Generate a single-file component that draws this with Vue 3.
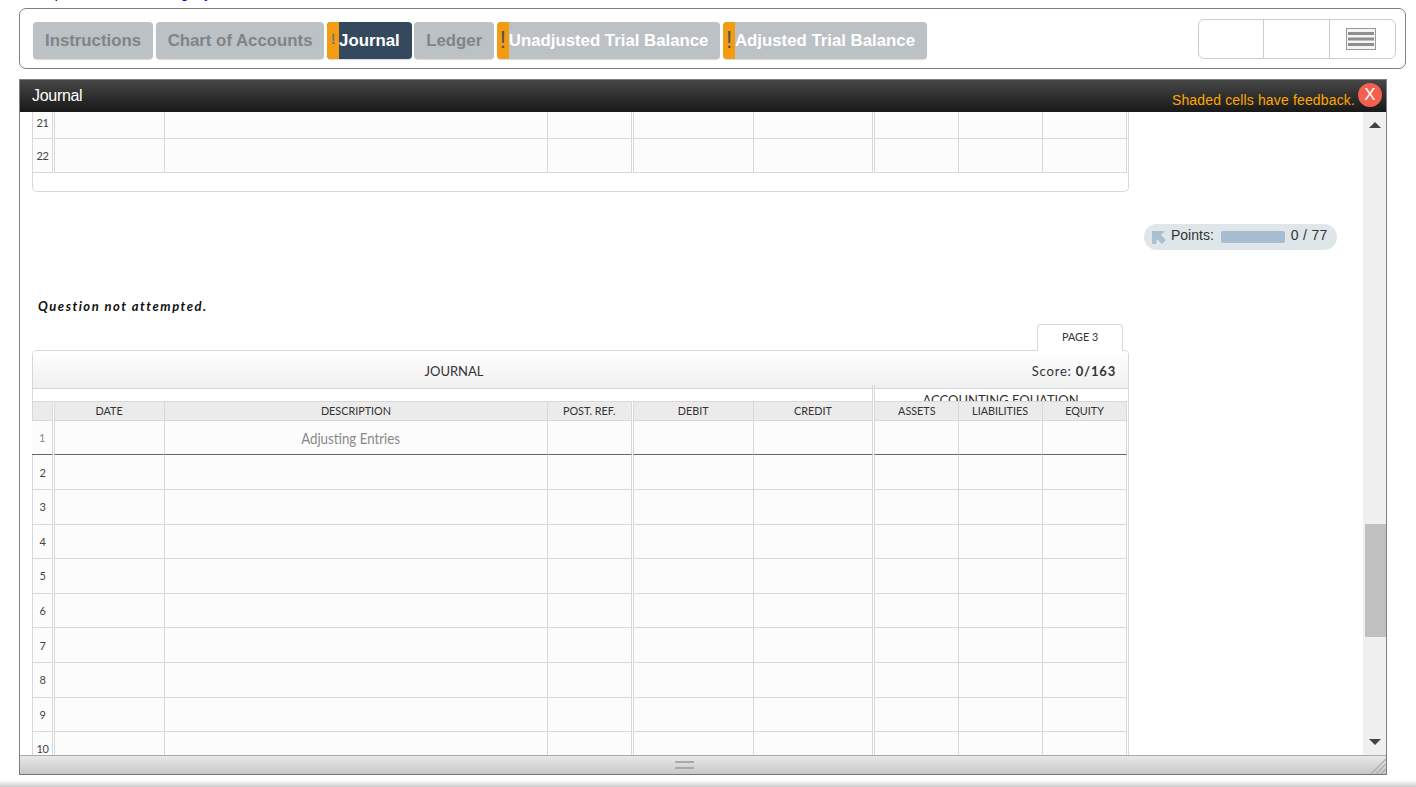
<script setup>
const tabs = [
  { label: 'Instructions', state: 'off' },
  { label: 'Chart of Accounts', state: 'off' },
  { label: 'Journal', state: 'active', warn: true },
  { label: 'Ledger', state: 'off' },
  { label: 'Unadjusted Trial Balance', state: 'done', warn: true },
  { label: 'Adjusted Trial Balance', state: 'done', warn: true }
]

const columns = ['DATE', 'DESCRIPTION', 'POST. REF.', 'DEBIT', 'CREDIT', 'ASSETS', 'LIABILITIES', 'EQUITY']
const lowerRows = [2, 3, 4, 5, 6, 7, 8, 9, 10]
</script>

<template>
  <div class="page">
    <div class="cut-line"><span>Required</span><a>glory</a></div>

    <div class="topbar">
      <div class="tabs">
        <div v-for="tab in tabs" :key="tab.label" class="tab" :class="tab.state">
          <span v-if="tab.warn" class="warn">!</span>
          <span class="tab-label">{{ tab.label }}</span>
        </div>
      </div>
      <div class="tools">
        <div class="tool"></div>
        <div class="tool"></div>
        <div class="tool">
          <svg width="30" height="22" viewBox="0 0 30 22">
            <rect x="0.5" y="0.5" width="29" height="21" fill="#f4f4f4" stroke="#999" />
            <path d="M2 5.5H28M2 11H28M2 16.5H28" stroke="#8f8f8f" stroke-width="3.2" />
          </svg>
        </div>
      </div>
    </div>

    <div class="window">
      <div class="win-head">
        <span class="win-title">Journal</span>
        <span class="win-note">Shaded cells have feedback.</span>
        <span class="win-close">X</span>
      </div>

      <div class="win-body">
        <div class="scroll">
          <div class="card card-top">
            <div class="row cut">
              <div class="num">21</div><div class="gap"></div>
              <div class="cell lead"></div><div class="cell"></div><div class="cell"></div><div class="gap"></div>
              <div class="cell lead"></div><div class="cell"></div><div class="gap"></div>
              <div class="cell lead"></div><div class="cell"></div><div class="cell"></div>
            </div>
            <div class="row">
              <div class="num">22</div><div class="gap"></div>
              <div class="cell lead"></div><div class="cell"></div><div class="cell"></div><div class="gap"></div>
              <div class="cell lead"></div><div class="cell"></div><div class="gap"></div>
              <div class="cell lead"></div><div class="cell"></div><div class="cell"></div>
            </div>
          </div>

          <div class="points-row">
            <div class="points">
              <svg width="14" height="13" viewBox="0 0 14 13">
                <path d="M0 0H13L9 4L14 9L10 13L5 8L4 13H0Z" fill="#a9c0d0" />
              </svg>
              <span class="points-text">Points:</span>
              <i class="points-bar"></i>
              <span class="points-text points-val">0 / 77</span>
            </div>
          </div>

          <p class="attempt">Question not attempted.</p>

          <div class="page-tab"><span class="narrow">PAGE 3</span></div>
          <div class="card card-main">
            <i class="eq-rule"></i>
            <div class="title">
              <span class="title-name">JOURNAL</span>
              <span class="score">Score: <b>0/163</b></span>
            </div>
            <div class="group">
              <div class="group-eq">ACCOUNTING EQUATION</div>
            </div>
            <div class="row head">
              <div class="num"></div><div class="gap"></div>
              <div class="cell lead"><span class="narrow">{{ columns[0] }}</span></div>
              <div class="cell"><span class="narrow">{{ columns[1] }}</span></div>
              <div class="cell"><span class="narrow">{{ columns[2] }}</span></div><div class="gap"></div>
              <div class="cell lead"><span class="narrow">{{ columns[3] }}</span></div>
              <div class="cell"><span class="narrow">{{ columns[4] }}</span></div><div class="gap"></div>
              <div class="cell lead"><span class="narrow">{{ columns[5] }}</span></div>
              <div class="cell"><span class="narrow">{{ columns[6] }}</span></div>
              <div class="cell"><span class="narrow">{{ columns[7] }}</span></div>
            </div>
            <div class="row first">
              <div class="num pale">1</div><div class="gap"></div>
              <div class="cell lead"></div>
              <div class="cell entry"><span class="narrow">Adjusting Entries</span></div>
              <div class="cell"></div><div class="gap"></div>
              <div class="cell lead"></div><div class="cell"></div><div class="gap"></div>
              <div class="cell lead"></div><div class="cell"></div><div class="cell"></div>
            </div>
            <div v-for="n in lowerRows" :key="n" class="row">
              <div class="num">{{ n }}</div><div class="gap"></div>
              <div class="cell lead"></div><div class="cell"></div><div class="cell"></div><div class="gap"></div>
              <div class="cell lead"></div><div class="cell"></div><div class="gap"></div>
              <div class="cell lead"></div><div class="cell"></div><div class="cell"></div>
            </div>
          </div>
        </div>

        <div class="scrollbar">
          <i class="arrow up"></i>
          <i class="thumb"></i>
          <i class="arrow down"></i>
        </div>
      </div>

      <div class="win-foot">
        <i class="grip"></i>
        <svg class="resize" width="16" height="16" viewBox="0 0 16 16">
          <path d="M1 16L16 1M6 16L16 6M11 16L16 11" stroke="#aaa" stroke-width="1.2" />
        </svg>
      </div>
    </div>

    <div class="page-shade"></div>
  </div>
</template>

<style scoped>
.page {
  width: 1416px;
  height: 787px;
  overflow: hidden;
  background: #fff;
  font-family: "Liberation Sans", Arial, sans-serif;
}

.cut-line {
  height: 8px;
  overflow: hidden;
  padding-left: 32px;
  display: flex;
  gap: 92px;
  font-size: 14px;
  line-height: 14px;
}

.cut-line span,
.cut-line a {
  display: block;
  margin-top: -14px;
  color: #000;
}

.cut-line a {
  color: #00e;
}

.topbar {
  width: 1387px;
  height: 61px;
  box-sizing: border-box;
  margin-left: 19px;
  padding: 10px 9px 0 13px;
  border: 1px solid #808080;
  border-radius: 7px;
  display: flex;
  justify-content: space-between;
}

.tabs {
  display: flex;
  gap: 2.6px;
  margin-top: 3px;
  height: 37px;
}

.tab {
  display: flex;
  align-items: center;
  height: 37px;
  padding: 0 12px;
  border-radius: 4px;
  overflow: hidden;
  background: #bcc1c5;
  box-shadow: 0 1px 1px #d8dbdd;
  color: #808487;
  font-size: 16.8px;
  font-weight: bold;
}

.tab.done {
  color: #fff;
  padding-left: 0;
}

.tab.active {
  color: #fff;
  padding-left: 0;
  background: #34495e;
}

.warn {
  width: 12px;
  height: 37px;
  background: #f39c12;
  color: #555;
  font-weight: normal;
  font-size: 24px;
  line-height: 35px;
  text-align: center;
}

.active .warn {
  color: #777;
  font-size: 14px;
  font-weight: bold;
}

.tools {
  width: 198px;
  height: 40px;
  box-sizing: border-box;
  border: 1px solid #ccc;
  border-radius: 6px;
  display: flex;
}

.tool {
  width: 66px;
  display: flex;
  align-items: center;
  justify-content: center;
  box-sizing: border-box;
  border-left: 1px solid #ccc;
}

.tool:first-child {
  width: 64px;
  border-left: 0;
}

.tool svg {
  margin-right: 4px;
}

.window {
  width: 1368px;
  height: 696px;
  box-sizing: border-box;
  margin: 10px 0 0 19px;
  border: 1px solid #808080;
  border-bottom-color: #777;
  display: flex;
  flex-direction: column;
}

.win-head {
  position: relative;
  height: 32px;
  flex: none;
  display: flex;
  align-items: center;
  justify-content: space-between;
  padding: 0 31px 0 12px;
  background: linear-gradient(#474747, #181818);
}

.win-title {
  color: #fff;
  font-size: 16px;
  letter-spacing: -0.3px;
}

.win-note {
  margin-top: 8px;
  color: #ffa500;
  font-size: 14px;
  letter-spacing: 0.15px;
}

.win-close {
  position: absolute;
  right: 4px;
  top: 3px;
  width: 24px;
  height: 24px;
  border-radius: 50%;
  background: #f3604f;
  color: #fff;
  font-size: 17px;
  line-height: 24px;
  text-align: center;
}

.win-body {
  flex: 1;
  min-height: 0;
  display: flex;
}

.scroll {
  flex: 1;
  min-width: 0;
  overflow: hidden;
  padding-left: 12px;
  font-family: Lato, sans-serif;
  color: #333;
}

.card {
  width: 1097px;
  box-sizing: border-box;
  border: 1px solid #d8d8d8;
}

.card-top {
  height: 80px;
  border-top: 0;
  border-radius: 0 0 5px 5px;
}

.card-main {
  position: relative;
  border-radius: 5px 5px 0 0;
  border-bottom: 0;
}

.eq-rule {
  position: absolute;
  left: 839px;
  top: 34px;
  width: 1px;
  height: 16px;
  border-left: 1px solid #d8d8d8;
  border-right: 1px solid #d8d8d8;
}

.row {
  display: grid;
  grid-template-columns: 20px 1px 111px 383px 84px 1px 121px 119px 1px 85px 84px 84px;
  height: 34.6px;
  width: 1094px;
}

.row.cut {
  height: 26.6px;
}

.row.cut .num {
  padding-bottom: 5px;
}

.row.head {
  height: 20px;
}

.row.head .num,
.row.head .cell {
  background: #ebebeb;
  border-top: 1px solid #d8d8d8;
}

.row.head .narrow {
  margin-top: -1px;
}

.row.first {
  height: 34.4px;
}

.row.first .num,
.row.first .cell {
  border-bottom-color: #666;
}

.row.first .num {
  margin-left: -1px;
}

.num,
.cell {
  display: flex;
  align-items: center;
  justify-content: center;
  box-sizing: border-box;
  background: #fcfcfc;
  border-right: 1px solid #d8d8d8;
  border-bottom: 1px solid #d8d8d8;
  font-size: 12px;
  white-space: nowrap;
}

.num {
  font-size: 11px;
  letter-spacing: -0.5px;
  color: #444;
}

.num.pale {
  color: #888;
}

.cell.lead {
  border-left: 1px solid #d8d8d8;
}

.narrow {
  display: inline-block;
  transform: scaleX(0.9);
}

.entry {
  padding-right: 10px;
  color: #888;
  font-size: 16px;
}

.entry .narrow {
  transform: scaleX(0.83);
}

.points-row {
  display: flex;
  justify-content: flex-end;
  padding: 32px 26px 0 0;
}

.points {
  display: flex;
  align-items: center;
  box-sizing: border-box;
  width: 193px;
  height: 26px;
  padding-left: 8px;
  border-radius: 13px;
  background: #dfe6ea;
  color: #333;
  font-family: "Liberation Sans", Arial, sans-serif;
  font-size: 14px;
}

.points svg {
  margin: 1px 5px 0 0;
  flex: none;
}

.points-text {
  margin-top: -4px;
}

.points-bar {
  width: 64px;
  height: 12px;
  margin: 0 6px 0 7px;
  border-radius: 2px;
  background: #a5bdce;
}

.points-val {
  letter-spacing: 0.3px;
}

.attempt {
  margin: 47px 0 0 6px;
  font-family: Lato, sans-serif;
  font-size: 13px;
  font-weight: bold;
  font-style: italic;
  line-height: 18px;
  letter-spacing: 1.5px;
  color: #111;
}

.page-tab {
  width: 86px;
  height: 27px;
  box-sizing: border-box;
  margin: 9px 0 -1px 1005px;
  position: relative;
  z-index: 1;
  border: 1px solid #d8d8d8;
  border-bottom: 0;
  border-radius: 4px 4px 0 0;
  background: #fff;
  font-size: 12px;
  line-height: 23px;
  text-align: center;
}

.title {
  height: 38px;
  display: flex;
  align-items: center;
  box-sizing: border-box;
  padding: 2px 12px 0 0;
  border-bottom: 1px solid #d8d8d8;
  border-radius: 4px 4px 0 0;
  background: linear-gradient(#fff, #f0f0f0);
  font-family: Lato, sans-serif;
  font-size: 13px;
}

.title-name {
  width: 842px;
  text-align: center;
}

.score {
  margin-left: auto;
  letter-spacing: 0.8px;
}

.group {
  height: 12px;
  overflow: hidden;
  padding-left: 841px;
}

.group-eq {
  width: 253px;
  height: 12px;
  box-sizing: border-box;
  padding-top: 3px;
  text-align: center;
  font-family: Lato, sans-serif;
  font-size: 13px;
  line-height: 16px;
}

.scrollbar {
  position: relative;
  width: 23px;
  flex: none;
  background: #f0f0f0;
  display: flex;
  flex-direction: column;
  align-items: flex-end;
}

.thumb {
  width: 21px;
  height: 113px;
  margin-top: 412px;
  background: #c0c0c0;
}

.arrow {
  position: absolute;
  left: 6px;
  width: 0;
  height: 0;
  border-left: 6px solid transparent;
  border-right: 6px solid transparent;
}

.arrow.up {
  top: 10px;
  border-bottom: 6px solid #444;
}

.arrow.down {
  bottom: 10px;
  border-top: 6px solid #444;
}

.win-foot {
  position: relative;
  height: 19px;
  flex: none;
  box-sizing: border-box;
  border-top: 1px solid #aaa;
  background: linear-gradient(#e8e8e8, #c8c8c8);
  display: flex;
  align-items: center;
  justify-content: center;
}

.grip {
  width: 19px;
  height: 4px;
  margin-right: 37px;
  border-top: 2px solid #aaa;
  border-bottom: 2px solid #aaa;
}

.resize {
  position: absolute;
  right: 0;
  bottom: 0;
}

.page-shade {
  height: 7px;
  margin-top: 5px;
  background: linear-gradient(#fff, #ccc);
}
</style>

<style>
html,
body {
  margin: 0;
  overflow: hidden;
}
</style>
